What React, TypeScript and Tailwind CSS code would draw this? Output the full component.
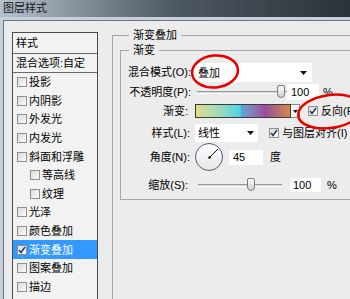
import React from 'react';

const Check: React.FC<{ checked?: boolean }> = ({ checked }) => (
  <span className="w-[10px] h-[10px] shrink-0 border border-[#8e8f8f] bg-gradient-to-br from-[#dcdcdc] to-[#fbfbfb] flex items-center justify-center">
    {checked && (
      <svg width="8" height="8" viewBox="0 0 8 8">
        <path d="M1 4 L3 6.5 L7 1" fill="none" stroke="#2a3a5c" strokeWidth="1.6" />
      </svg>
    )}
  </span>
);

const Arrow = () => (
  <svg width="7" height="4" viewBox="0 0 7 4" className="shrink-0">
    <path d="M0 0 H7 L3.5 4 Z" fill="#111" />
  </svg>
);

const Slider: React.FC<{ width: string; thumb: string }> = ({ width, thumb }) => (
  <div className={`relative h-[16px] flex items-center ${width}`}>
    <div className="w-full h-[3px] border-t border-[#9a9a9a] border-b border-b-white bg-[#d4d4d4]" />
    <div
      className={`absolute top-[1px] ${thumb} w-[8px] h-[13px] rounded-[2px] rounded-b-[4px] border border-[#7d7d7d] bg-gradient-to-b from-[#fafafa] to-[#d2d2d2]`}
    />
  </div>
);

const items: { name: string; indent?: boolean; selected?: boolean }[] = [
  { name: '投影' },
  { name: '内阴影' },
  { name: '外发光' },
  { name: '内发光' },
  { name: '斜面和浮雕' },
  { name: '等高线', indent: true },
  { name: '纹理', indent: true },
  { name: '光泽' },
  { name: '颜色叠加' },
  { name: '渐变叠加', selected: true },
  { name: '图案叠加' },
  { name: '描边' },
];

export default function App() {
  return (
    <div className="relative w-[350px] h-[299px] overflow-hidden flex flex-col bg-[#c4d0dc] font-['Liberation_Sans','Noto_Sans_CJK_SC',sans-serif] text-[11px] text-black">
      {/* title bar */}
      <div className="h-[17px] shrink-0 pl-[3px] leading-[17px] text-[11px] text-[#141414] bg-gradient-to-r from-[#b6c2ce] via-[#4e5862] to-[#2c3239]">
        图层样式
      </div>

      <div className="flex-1 min-h-0 pt-[3px] pl-[3px]">
        <div className="h-full flex border-t border-l border-[#6c7580] bg-[#ececec] overflow-hidden">
          {/* style list */}
          <div className="ml-[8px] mt-[11px] w-[86px] h-[300px] shrink-0 border border-[#4a4a4a] bg-[#f2f2f2]">
            <div className="h-[21px] border-b border-[#6a6a6a] pl-[3px] leading-[20px]">样式</div>
            <div className="h-[19px] border-b border-[#6a6a6a] pl-[3px] leading-[18px]">混合选项:自定</div>
            {items.map((it) => (
              <div
                key={it.name}
                className={`h-[18.6px] flex items-center gap-[2px] ${it.indent ? 'pl-[17px]' : 'pl-[4px]'} ${
                  it.selected ? 'bg-[#3399ff] text-white' : ''
                }`}
              >
                <Check checked={it.selected} />
                <span className="leading-[14px]">{it.name}</span>
              </div>
            ))}
          </div>

          {/* settings */}
          <fieldset className="ml-[14px] mt-[7px] w-[260px] h-[320px] shrink-0 min-w-0 border-t border-l border-r-0 border-b-0 border-[#a6a6a6] pl-[7px]">
            <legend className="ml-[9px] px-[4px] leading-[14px]">渐变叠加</legend>

            <fieldset className="mt-[1px] w-[300px] min-w-0 border border-r-0 border-[#a6a6a6] pb-[6px]">
              <legend className="ml-[8px] px-[4px] leading-[14px]">渐变</legend>

              {/* blend mode */}
              <div className="mt-[6px] flex items-center h-[19px]">
                <span className="w-[70px] text-right whitespace-nowrap">混合模式(O):</span>
                <div className="ml-[2px] w-[119px] h-[19px] bg-white flex items-center justify-between pl-[5px] pr-[5px]">
                  <span className="leading-[14px]">叠加</span>
                  <Arrow />
                </div>
              </div>

              {/* opacity */}
              <div className="mt-[2px] flex items-center h-[16px]">
                <span className="w-[70px] text-right whitespace-nowrap">不透明度(P):</span>
                <div className="ml-[6px]">
                  <Slider width="w-[90px]" thumb="left-[80px]" />
                </div>
                <div className="w-[32px] h-[16px] bg-white pl-[4px] leading-[16px]">100</div>
                <span className="ml-[4px]">%</span>
              </div>

              {/* gradient */}
              <div className="mt-[4px] flex items-center h-[14px]">
                <span className="w-[67px] text-right">渐变:</span>
                <div className="ml-[7px] w-[96px] h-[14px] border border-[#3c3c3c] bg-gradient-to-r from-[#e0dc88] via-[#2fd2e6] to-[#d2843e] relative overflow-hidden">
                  <div className="absolute inset-y-0 left-[48%] right-0 bg-gradient-to-r from-[#5aa6d8] via-[#9a4c98] to-[#d8853c]" />
                </div>
                <div className="w-[9px] h-[14px] bg-[#f4f4f4] border border-l-0 border-[#8a8a8a] flex items-center justify-center">
                  <svg width="5" height="3" viewBox="0 0 5 3">
                    <path d="M0 0 H5 L2.5 3 Z" fill="#111" />
                  </svg>
                </div>
                <div className="ml-[8px] flex items-center gap-[3px] whitespace-nowrap">
                  <Check checked />
                  <span>反向(R)</span>
                </div>
              </div>

              {/* style */}
              <div className="mt-[6px] flex items-center h-[18px]">
                <span className="w-[69px] text-right">样式(L):</span>
                <div className="ml-[5px] w-[63px] h-[18px] bg-white flex items-center justify-between pl-[3px] pr-[4px]">
                  <span className="leading-[14px]">线性</span>
                  <Arrow />
                </div>
                <div className="ml-[11px] flex items-center gap-[3px] whitespace-nowrap">
                  <Check checked />
                  <span>与图层对齐(I)</span>
                </div>
              </div>

              {/* angle */}
              <div className="mt-[1px] flex items-center h-[28px]">
                <span className="w-[69px] text-right">角度(N):</span>
                <div className="ml-[5px] w-[28px] h-[28px] rounded-full border-[1.5px] border-[#4f5d7c] bg-gradient-to-b from-[#ffffff] to-[#e6e6e6] flex items-center justify-center">
                  <svg width="25" height="25" viewBox="0 0 25 25">
                    <line x1="12.5" y1="12.5" x2="21" y2="4" stroke="#111" strokeWidth="1" />
                    <circle cx="12.5" cy="12.5" r="1.3" fill="#111" />
                  </svg>
                </div>
                <div className="ml-[6px] w-[34px] h-[15px] bg-white pl-[4px] leading-[15px]">45</div>
                <span className="ml-[7px]">度</span>
              </div>

              {/* scale */}
              <div className="mt-[6px] flex items-center h-[16px]">
                <span className="w-[67px] text-right">缩放(S):</span>
                <div className="ml-[10px]">
                  <Slider width="w-[84px]" thumb="left-[49px]" />
                </div>
                <div className="ml-[8px] w-[31px] h-[14px] bg-white pl-[3px] leading-[14px]">100</div>
                <span className="ml-[6px]">%</span>
              </div>
            </fieldset>
          </fieldset>
        </div>
      </div>

      {/* red markup circles */}
      <svg className="absolute inset-0 pointer-events-none" width="350" height="299" viewBox="0 0 350 299">
        <ellipse cx="215" cy="71.5" rx="23" ry="16" fill="none" stroke="#e80000" strokeWidth="2.5" transform="rotate(-6 215 71.5)" />
        <ellipse cx="330" cy="111.5" rx="32" ry="16.5" fill="none" stroke="#e80000" strokeWidth="2.5" transform="rotate(-8 330 111.5)" />
      </svg>
    </div>
  );
}
